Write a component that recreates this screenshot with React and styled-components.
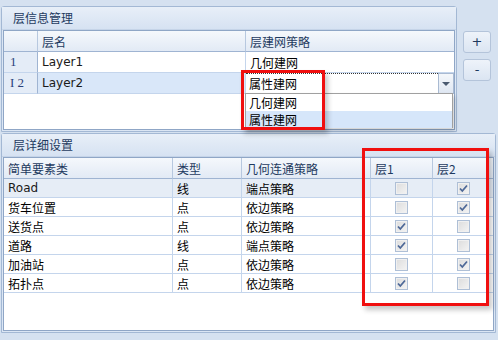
import React from "react";
import styled, { createGlobalStyle } from "styled-components";

const Global = createGlobalStyle`
  body {
    margin: 0;
    font-family: "Noto Sans CJK SC", "Liberation Sans", sans-serif;
  }
`;

const Page = styled.div`
  position: relative;
  width: 498px;
  height: 340px;
  background: #d5e1f0;
  overflow: hidden;
  font-size: 12px;
`;

const TopRow = styled.div`
  display: flex;
  padding: 6px 0 0 1px;
  gap: 6px;
`;

const Group = styled.div`
  position: relative;
  width: ${(p) => p.$w}px;
  height: ${(p) => p.$h}px;
  box-sizing: border-box;
  border: 1px solid #a3b8d4;
  border-radius: 3px 3px 0 0;
  background: #dbe6f4;
  display: flex;
  flex-direction: column;
`;

const GroupTitle = styled.div`
  height: 22px;
  flex: none;
  padding-left: 11px;
  line-height: 22px;
  font-size: 12px;
  color: #1e3a5f;
  background: linear-gradient(#e8eff8, #d6e2f2);
  border-bottom: 1px solid #c5d4e8;
`;

const GridBox = styled.div`
  position: relative;
  flex: 1;
  margin: 0 1px 1px 1px;
  border: 1px solid #8fa6c6;
  background: #fff;
`;

const Row = styled.div`
  display: grid;
  grid-template-columns: ${(p) => p.$cols};
  height: ${(p) => p.$h}px;
  background: ${(p) => p.$bg || "#fff"};
`;

const HeadCell = styled.div`
  box-sizing: border-box;
  border-right: 1px solid #b7c8df;
  border-bottom: 1px solid #9fb4d2;
  background: linear-gradient(#f5f8fc, #e2eaf5);
  color: #1e3a5f;
  padding-left: 4px;
  display: flex;
  align-items: center;
  white-space: nowrap;
  &:last-child {
    border-right: none;
  }
`;

const Cell = styled.div`
  box-sizing: border-box;
  border-right: 1px solid #c4d5ec;
  border-bottom: 1px solid #c4d5ec;
  padding-left: ${(p) => (p.$center ? 0 : 4)}px;
  display: flex;
  align-items: center;
  justify-content: ${(p) => (p.$center ? "center" : "flex-start")};
  color: #000;
  white-space: nowrap;
  &:last-child {
    border-right: none;
  }
`;

const Indicator = styled(Cell)`
  background: #e4ecf7;
  color: #2a3f7a;
  border-right: 1px solid #9fb4d2;
  padding-left: 6px;
  font-family: "Liberation Serif", serif;
  font-size: 13px;
`;

const Latin = styled.span`
  font-family: "DejaVu Sans", sans-serif;
  font-size: 12px;
  color: #1a1a1a;
`;

const Combo = styled.div`
  position: relative;
  box-sizing: border-box;
  border-bottom: 1px solid #c4d5ec;
  background: #fff;
  display: flex;
  align-items: center;
  padding-left: 3px;
  border-top: 1px dotted #333;
`;

const ComboArrow = styled.div`
  position: absolute;
  right: 0;
  top: -1px;
  width: 16px;
  height: 21px;
  box-sizing: border-box;
  border: 1px solid #a9bad2;
  background: linear-gradient(#f4f7fb, #dfe7f2);
  display: flex;
  align-items: center;
  justify-content: center;
  &::after {
    content: "";
    border-left: 4px solid transparent;
    border-right: 4px solid transparent;
    border-top: 4px solid #4a5a70;
  }
`;

const DropList = styled.div`
  position: absolute;
  left: 241px;
  top: 62px;
  width: 208px;
  height: 35px;
  box-sizing: border-box;
  border: 1px solid #a0a0a0;
  background: #fff;
  box-shadow: 2px 3px 4px rgba(0, 0, 0, 0.18);
`;

const DropItem = styled.div`
  height: 17px;
  line-height: 17px;
  padding-left: 3px;
  background: ${(p) => (p.$active ? "#d6e6fa" : "#fff")};
`;

const Mark = styled.div`
  position: absolute;
  left: ${(p) => p.$x}px;
  top: ${(p) => p.$y}px;
  width: ${(p) => p.$w}px;
  height: ${(p) => p.$h}px;
  box-sizing: border-box;
  border: 3px solid #f00f0f;
  box-shadow: 3px 4px 5px rgba(0, 0, 0, 0.22);
  pointer-events: none;
`;

const Buttons = styled.div`
  display: flex;
  flex-direction: column;
  gap: 6px;
  padding-top: 25px;
`;

const SmallButton = styled.button`
  width: 28px;
  height: 22px;
  border: 1px solid #b4c4da;
  border-radius: 3px;
  background: linear-gradient(#eef3fa, #dbe5f2);
  color: #1e3a5f;
  font-family: "DejaVu Sans", sans-serif;
  font-size: 13px;
  padding: 0;
  line-height: 18px;
`;

const Box = styled.span`
  width: 13px;
  height: 13px;
  box-sizing: border-box;
  border: 1px solid #aebfd6;
  background: linear-gradient(135deg, #dcdcdc, #f4f4f4);
  display: flex;
  align-items: center;
  justify-content: center;
  box-shadow: inset 0 0 0 1px #f0f0f0;
`;

const Check = ({ on }) => (
  <Box>
    {on && (
      <svg width="11" height="11" viewBox="0 0 11 11">
        <path d="M2 5.5 L4.3 8 L9 2.5" fill="none" stroke="#4d6897" strokeWidth="1.8" />
      </svg>
    )}
  </Box>
);

const topCols = "34px 208px 1fr";
const bottomCols = "169px 69px 129px 62px 1fr";

const features = [
  { name: "Road", latin: true, type: "线", rule: "端点策略", a: false, b: true },
  { name: "货车位置", type: "点", rule: "依边策略", a: false, b: true },
  { name: "送货点", type: "点", rule: "依边策略", a: true, b: false },
  { name: "道路", type: "线", rule: "端点策略", a: true, b: false },
  { name: "加油站", type: "点", rule: "依边策略", a: false, b: true },
  { name: "拓扑点", type: "点", rule: "依边策略", a: true, b: false },
];

export default function App() {
  return (
    <Page>
      <Global />
      <TopRow>
        <Group $w={456} $h={126}>
          <GroupTitle>层信息管理</GroupTitle>
          <GridBox>
            <Row $cols={topCols} $h={21}>
              <HeadCell />
              <HeadCell>层名</HeadCell>
              <HeadCell>层建网策略</HeadCell>
            </Row>
            <Row $cols={topCols} $h={21}>
              <Indicator>1</Indicator>
              <Cell>
                <Latin>Layer1</Latin>
              </Cell>
              <Cell>几何建网</Cell>
            </Row>
            <Row $cols={topCols} $h={21} $bg="#d9e7f9">
              <Indicator>I 2</Indicator>
              <Cell>
                <Latin>Layer2</Latin>
              </Cell>
              <Combo>
                属性建网
                <ComboArrow />
              </Combo>
            </Row>
            <DropList>
              <DropItem>几何建网</DropItem>
              <DropItem $active>属性建网</DropItem>
            </DropList>
          </GridBox>
        </Group>
        <Buttons>
          <SmallButton>+</SmallButton>
          <SmallButton>-</SmallButton>
        </Buttons>
      </TopRow>
      <TopRow style={{ paddingTop: 1 }}>
        <Group $w={495} $h={200}>
          <GroupTitle>层详细设置</GroupTitle>
          <GridBox>
            <Row $cols={bottomCols} $h={21}>
              <HeadCell>简单要素类</HeadCell>
              <HeadCell>类型</HeadCell>
              <HeadCell>几何连通策略</HeadCell>
              <HeadCell>层1</HeadCell>
              <HeadCell>层2</HeadCell>
            </Row>
            {features.map((f, i) => (
              <Row key={f.name} $cols={bottomCols} $h={19} $bg={i === 0 ? "#e6edf6" : "#fff"}>
                <Cell>{f.latin ? <Latin>{f.name}</Latin> : f.name}</Cell>
                <Cell>{f.type}</Cell>
                <Cell>{f.rule}</Cell>
                <Cell $center>
                  <Check on={f.a} />
                </Cell>
                <Cell $center>
                  <Check on={f.b} />
                </Cell>
              </Row>
            ))}
          </GridBox>
        </Group>
      </TopRow>
      <Mark $x={241} $y={70} $w={84} $h={60} />
      <Mark $x={362} $y={148} $w={127} $h={158} />
    </Page>
  );
}
